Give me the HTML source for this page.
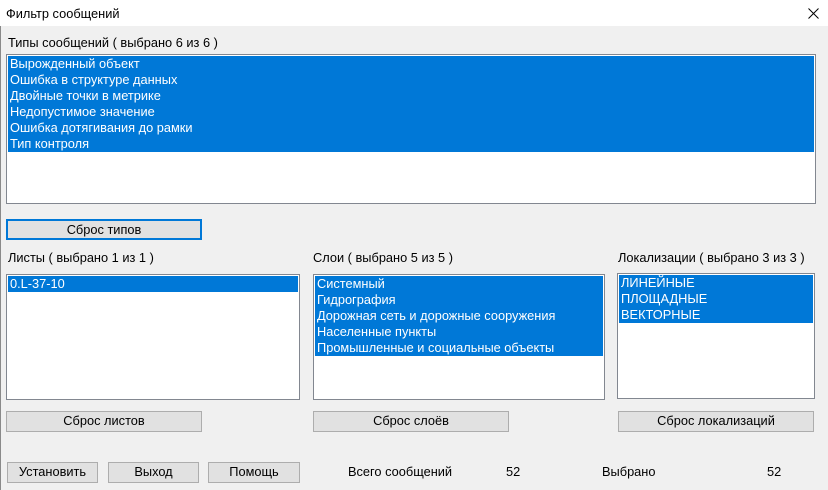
<!DOCTYPE html>
<html><head><meta charset="utf-8"><style>
*{margin:0;padding:0;box-sizing:border-box}
body{width:828px;height:490px;background:#f0f0f0;font-family:"Liberation Sans","DejaVu Sans",sans-serif;font-size:12.8px;color:#000;position:relative;overflow:hidden}
.a{position:absolute;white-space:nowrap}
.title{left:0;top:0;width:828px;height:26px;background:#fff}
.lb{position:absolute;background:#fff;border:1px solid #828790;padding:1px}
.it{background:#0078d7;color:#fff;height:16px;line-height:16px;padding-left:2px;white-space:nowrap}
.btn{position:absolute;background:#e1e1e1;border:1px solid #adadad;text-align:center;line-height:18px}
</style></head><body>
<div class="a title"></div>
<div class="a" style="left:0;top:26px;width:1px;height:464px;background:#8a8a8a"></div>
<div class="a" style="left:6px;top:6px">Фильтр сообщений</div>
<svg class="a" style="left:808px;top:8px" width="11" height="11"><path d="M0.5 0.5L10.5 10.5M10.5 0.5L0.5 10.5" stroke="#000" stroke-width="1"/></svg>

<div class="a" style="left:8px;top:35px">Типы сообщений ( выбрано 6 из 6 )</div>
<div class="lb" style="left:6px;top:54px;width:810px;height:150px">
<div class="it">Вырожденный объект</div><div class="it">Ошибка в структуре данных</div><div class="it">Двойные точки в метрике</div><div class="it">Недопустимое значение</div><div class="it">Ошибка дотягивания до рамки</div><div class="it">Тип контроля</div>
</div>
<div class="btn" style="left:6px;top:219px;width:196px;height:21px;border:2px solid #0078d7;line-height:17px">Сброс типов</div>

<div class="a" style="left:8px;top:250px">Листы ( выбрано 1 из 1 )</div>
<div class="a" style="left:313px;top:250px">Слои ( выбрано 5 из 5 )</div>
<div class="a" style="left:618px;top:250px">Локализации ( выбрано 3 из 3 )</div>

<div class="lb" style="left:6px;top:274px;width:294px;height:126px"><div class="it">0.L-37-10</div></div>
<div class="lb" style="left:313px;top:274px;width:292px;height:126px">
<div class="it">Системный</div><div class="it">Гидрография</div><div class="it">Дорожная сеть и дорожные сооружения</div><div class="it">Населенные пункты</div><div class="it">Промышленные и социальные объекты</div></div>
<div class="lb" style="left:617px;top:273px;width:198px;height:126px">
<div class="it">ЛИНЕЙНЫЕ</div><div class="it">ПЛОЩАДНЫЕ</div><div class="it">ВЕКТОРНЫЕ</div></div>

<div class="btn" style="left:6px;top:411px;width:196px;height:21px">Сброс листов</div>
<div class="btn" style="left:313px;top:411px;width:196px;height:21px">Сброс слоёв</div>
<div class="btn" style="left:618px;top:411px;width:196px;height:21px">Сброс локализаций</div>

<div class="btn" style="left:7px;top:462px;width:91px;height:21px">Установить</div>
<div class="btn" style="left:108px;top:462px;width:91px;height:21px">Выход</div>
<div class="btn" style="left:208px;top:462px;width:92px;height:21px">Помощь</div>
<div class="a" style="left:348px;top:464px">Всего сообщений</div>
<div class="a" style="left:506px;top:464px">52</div>
<div class="a" style="left:602px;top:464px">Выбрано</div>
<div class="a" style="left:767px;top:464px">52</div>
</body></html>
